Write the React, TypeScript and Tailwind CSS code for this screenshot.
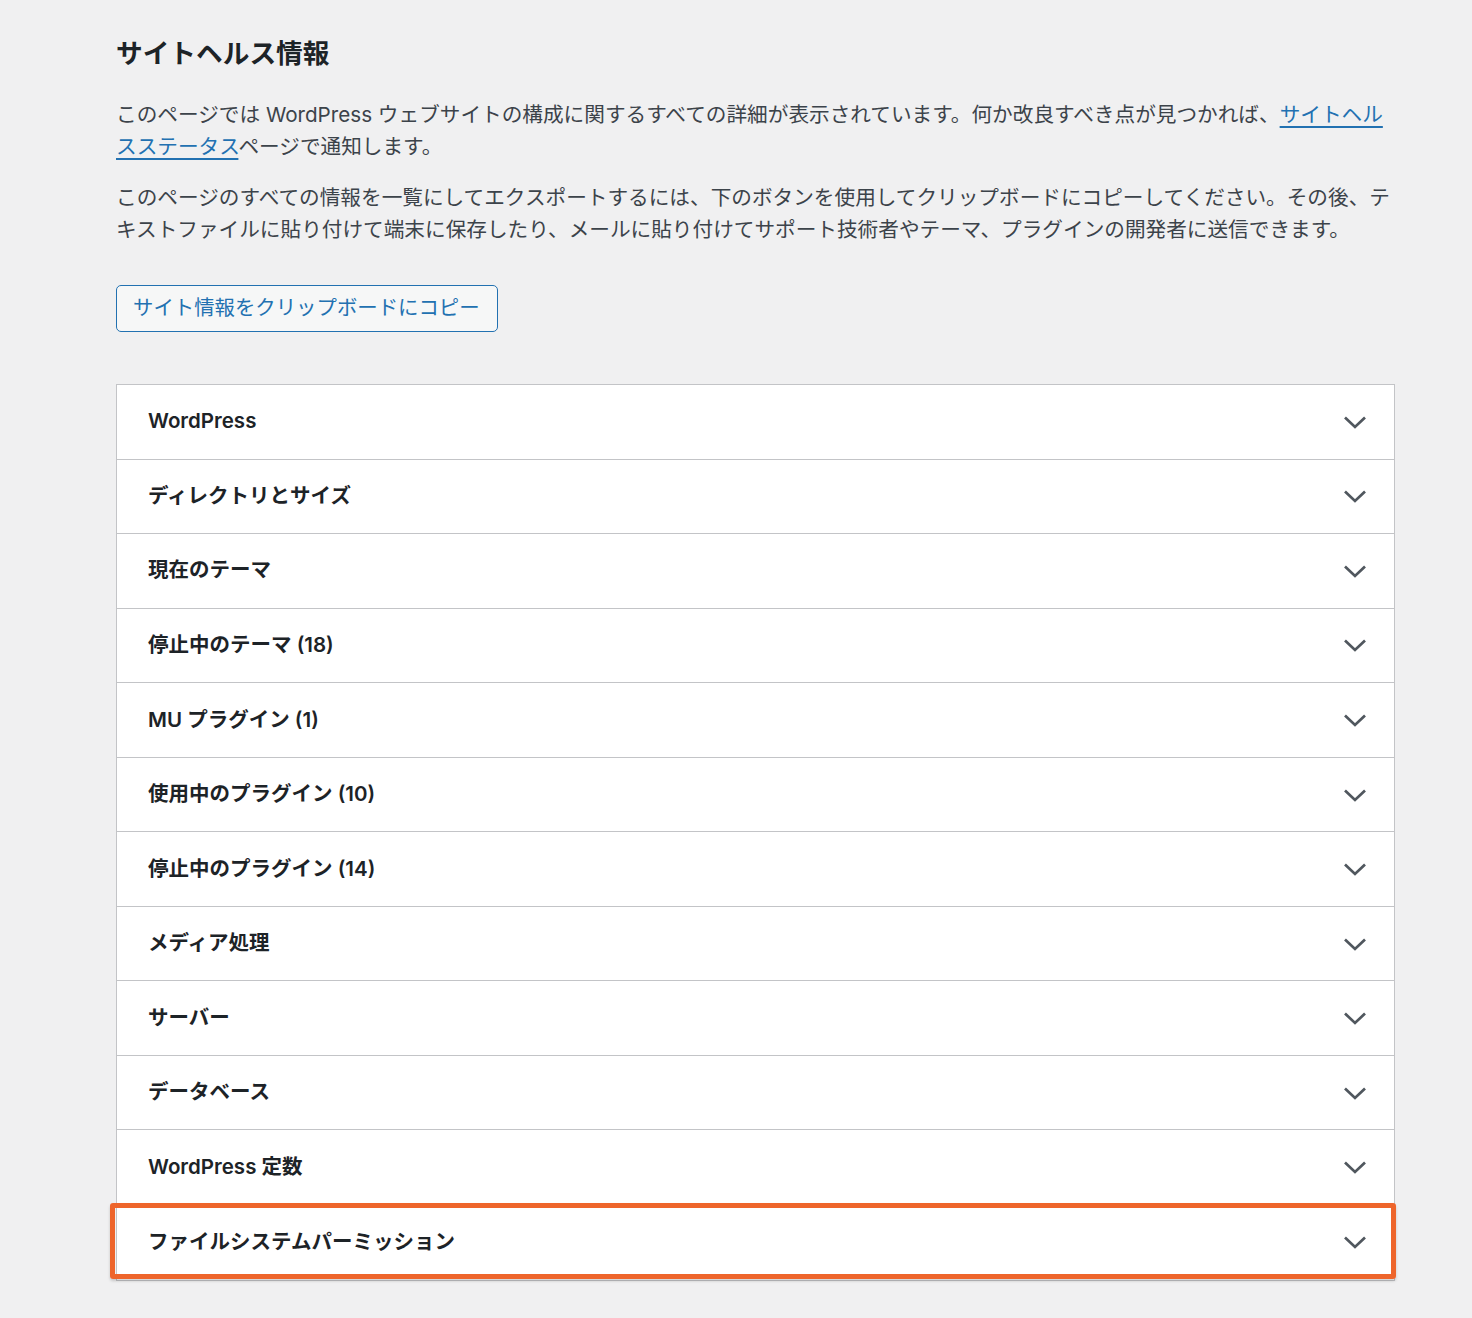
import React from "react";

const rows = [
  "WordPress",
  "ディレクトリとサイズ",
  "現在のテーマ",
  "停止中のテーマ (18)",
  "MU プラグイン (1)",
  "使用中のプラグイン (10)",
  "停止中のプラグイン (14)",
  "メディア処理",
  "サーバー",
  "データベース",
  "WordPress 定数",
  "ファイルシステムパーミッション",
];

function Chevron() {
  return (
    <svg width="26" height="16" viewBox="0 0 26 16" fill="none" className="shrink-0">
      <path d="M3 3.5 L13 13 L23 3.5" stroke="#50575e" strokeWidth="2.7" strokeLinecap="butt" strokeLinejoin="miter" />
    </svg>
  );
}

export default function App() {
  const font = { fontFamily: '"Inter", "Noto Sans CJK JP", "Noto Sans", sans-serif' };
  return (
    <div className="min-h-[1318px] w-full bg-[#f0f0f1] text-[#3c434a]" style={font}>
      <div className="pl-[116px] pt-[35px] w-[1394px]">
        <h1 className="text-[26.7px] leading-[36px] font-bold text-[#1d2327]">サイトヘルス情報</h1>
        <p className="mt-[28px] text-[20.65px] leading-[32px] whitespace-nowrap">
          このページでは WordPress ウェブサイトの構成に関するすべての詳細が表示されています。何か改良すべき点が見つかれば、
          <a className="text-[#2271b1] underline underline-offset-[4px] decoration-[2px]">サイトヘル</a>
          <br />
          <a className="text-[#2271b1] underline underline-offset-[4px] decoration-[2px]">スステータス</a>
          ページで通知します。
        </p>
        <p className="mt-[19px] text-[20.65px] leading-[32px] whitespace-nowrap">
          このページのすべての情報を一覧にしてエクスポートするには、下のボタンを使用してクリップボードにコピーしてください。その後、テ
          <br />
          キストファイルに貼り付けて端末に保存したり、メールに貼り付けてサポート技術者やテーマ、プラグインの開発者に送信できます。
        </p>
        <button className="mt-[39px] h-[47px] w-[382px] rounded-[5px] border border-[#2271b1] bg-[#f6f7f7] pl-[16px] text-left text-[20.4px] text-[#2271b1]">
          サイト情報をクリップボードにコピー
        </button>
        <div className="mt-[52px] w-[1279px] border border-[#c3c4c7] bg-white">
          {rows.map((r, i) => (
            <div
              key={r}
              className={
                "relative flex h-[74.55px] items-center justify-between pl-[31px] pr-[26px] " +
                (i < rows.length - 1 ? "border-b border-[#c3c4c7]" : "")
              }
            >
              <span className="text-[20.5px] font-semibold text-[#1d2327]">{r}</span>
              <Chevron />
              {i === rows.length - 1 && (
                <span className="pointer-events-none absolute -left-[7px] -right-[2px] -top-[2px] bottom-[1px] rounded-[3px] border-[5px] border-[#ee652b] shadow-[0_2px_3px_rgba(0,0,0,0.18)]" />
              )}
            </div>
          ))}
        </div>
      </div>
    </div>
  );
}
